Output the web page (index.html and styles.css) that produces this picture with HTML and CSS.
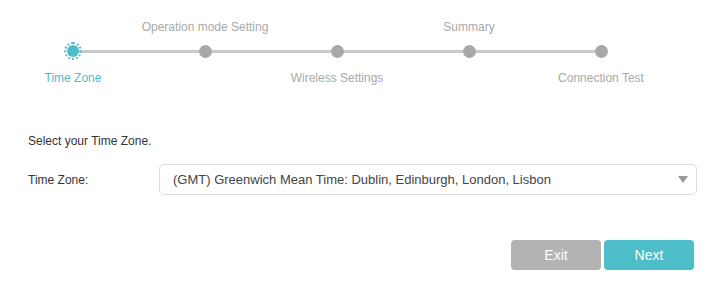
FILE: index.html
```html
<!DOCTYPE html>
<html lang="en">
<head>
  <meta charset="UTF-8" />
  <title>Quick Setup</title>
  <link rel="stylesheet" href="styles.css">
</head>
<body>
  <div class="wizard">
    <div class="steps">
      <div class="step active">
        <div class="label top"></div>
        <div class="dot-row"><span class="dot"></span></div>
        <div class="label bottom">Time Zone</div>
      </div>
      <div class="step">
        <div class="label top">Operation mode Setting</div>
        <div class="dot-row"><span class="dot"></span></div>
        <div class="label bottom"></div>
      </div>
      <div class="step">
        <div class="label top"></div>
        <div class="dot-row"><span class="dot"></span></div>
        <div class="label bottom">Wireless Settings</div>
      </div>
      <div class="step">
        <div class="label top">Summary</div>
        <div class="dot-row"><span class="dot"></span></div>
        <div class="label bottom"></div>
      </div>
      <div class="step">
        <div class="label top"></div>
        <div class="dot-row"><span class="dot"></span></div>
        <div class="label bottom">Connection Test</div>
      </div>
    </div>
  </div>

  <div class="content">
    <p class="intro">Select your Time Zone.</p>
    <div class="field">
      <label class="field-label">Time Zone:</label>
      <div class="select">
        <span class="select-text">(GMT) Greenwich Mean Time: Dublin, Edinburgh, London, Lisbon</span>
        <span class="arrow"></span>
      </div>
    </div>
  </div>

  <div class="actions">
    <button class="btn btn-exit">Exit</button>
    <button class="btn btn-next">Next</button>
  </div>
</body>
</html>
```

FILE: styles.css
```css
body {
  margin: 0;
  font-family: "Liberation Sans", Arial, sans-serif;
  background: #fff;
  color: #333;
}
.wizard {
  padding: 20px 0 0 7px;
}
.steps {
  position: relative;
  display: grid;
  grid-template-columns: repeat(5, 132px);
}
.steps::before {
  content: "";
  position: absolute;
  left: 66px;
  width: 528px;
  top: 30px;
  height: 3px;
  background: #c9c9c9;
}
.step {
  display: flex;
  flex-direction: column;
  align-items: center;
}
.label {
  height: 14px;
  line-height: 14px;
  font-size: 12px;
  color: #a9a9a9;
  white-space: nowrap;
}
.label.bottom {
  margin-top: 3px;
}
.step.active .label {
  color: #4cbdc9;
}
.dot-row {
  height: 34px;
  display: flex;
  align-items: center;
  justify-content: center;
  position: relative;
}
.dot {
  width: 13px;
  height: 13px;
  border-radius: 50%;
  background: #a8a8aa;
}
.step.active .dot {
  width: 12px;
  height: 12px;
  padding: 1px;
  border: 2px dotted #4cbdc9;
  background: #4cbdc9;
  background-clip: content-box;
}
.content {
  padding: 0 17px 0 28px;
}
.intro {
  margin: 48px 0 0;
  font-size: 12px;
  line-height: 16px;
  color: #333;
}
.field {
  display: flex;
  align-items: center;
  margin-top: 15px;
}
.field-label {
  width: 131px;
  font-size: 12px;
  color: #333;
}
.select {
  flex: 1;
  height: 29px;
  border: 1px solid #dcdcdc;
  border-radius: 5px;
  display: flex;
  align-items: center;
  justify-content: space-between;
  padding: 0 8px 0 13px;
}
.select-text {
  font-size: 13px;
  color: #444;
}
.arrow {
  width: 0;
  height: 0;
  border-left: 5px solid transparent;
  border-right: 5px solid transparent;
  border-top: 7px solid #999;
}
.actions {
  display: flex;
  justify-content: flex-end;
  gap: 3px;
  margin-top: 45px;
  padding-right: 20px;
}
.btn {
  width: 90px;
  height: 30px;
  border: none;
  border-radius: 4px;
  color: #fff;
  font-family: inherit;
  font-size: 14px;
  cursor: pointer;
}
.btn-exit {
  background: #b3b3b3;
}
.btn-next {
  background: #4cbdc9;
}
```
